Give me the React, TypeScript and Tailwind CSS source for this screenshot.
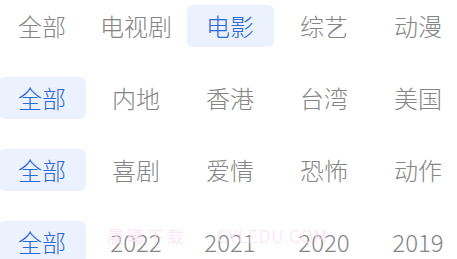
import React from "react";

const rows: { items: string[]; active: number }[] = [
  { items: ["全部", "电视剧", "电影", "综艺", "动漫"], active: 2 },
  { items: ["全部", "内地", "香港", "台湾", "美国"], active: 0 },
  { items: ["全部", "喜剧", "爱情", "恐怖", "动作"], active: 0 },
  { items: ["全部", "2022", "2021", "2020", "2019"], active: 0 },
];

export default function App() {
  return (
    <div
      className="relative w-[457px] h-[259px] overflow-hidden bg-white"
      style={{ fontFamily: '"Noto Sans CJK SC", "Noto Sans", sans-serif' }}
    >
      <div className="ml-[-5px] pt-[5px] flex flex-col gap-[30px]">
        {rows.map((row, ri) => (
          <div key={ri} className="grid grid-cols-[repeat(5,94px)]">
            {row.items.map((t, i) => (
              <div key={i} className="flex justify-center">
                <div
                  className={
                    i === row.active
                      ? "w-[87px] h-[42px] rounded-[6px] bg-[#ebf2fd] text-[#2d68da] flex items-center justify-center text-[24px] font-light leading-none"
                      : "w-[87px] h-[42px] text-[#858585] flex items-center justify-center text-[24px] font-light leading-none"
                  }
                >
                  {t}
                </div>
              </div>
            ))}
          </div>
        ))}
      </div>
      <div className="absolute left-[107px] top-[227px] text-[17px] font-light leading-none text-[#fbe1f5] flex gap-[30px] pointer-events-none">
        <span className="tracking-[3px]">晨曦下载</span>
        <span className="tracking-[1px]">CYLEDU.COM</span>
      </div>
    </div>
  );
}
